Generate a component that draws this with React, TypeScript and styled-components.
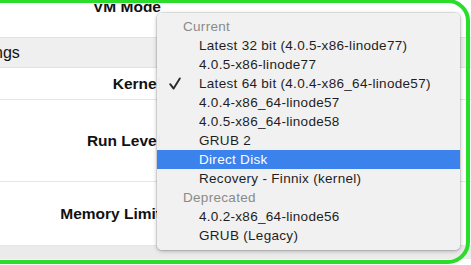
import styled, { createGlobalStyle } from 'styled-components';

const GlobalStyle = createGlobalStyle`
  html, body {
    margin: 0;
    padding: 0;
    background: #ffffff;
  }
  body {
    font-family: "Liberation Sans", Arial, Helvetica, sans-serif;
    -webkit-font-smoothing: antialiased;
  }
`;

const Page = styled.div`
  position: relative;
  width: 471px;
  height: 265px;
  overflow: hidden;
  background: #ffffff;
`;

const Form = styled.div`
  display: flex;
  flex-direction: column;
  margin-top: 4px;
  overflow: hidden;
`;

const Row = styled.div<{ h: number }>`
  display: grid;
  grid-template-columns: 161px 1fr;
  align-items: center;
  height: ${({ h }) => h}px;
  border-bottom: 1px solid #e6e6e6;
  background: #ffffff;
`;

const TopRow = styled.div`
  display: grid;
  grid-template-columns: 161px 1fr;
  align-items: start;
  height: 33px;
  background: #ffffff;
`;

const Label = styled.span<{ cut?: boolean }>`
  justify-self: end;
  font-size: 15.5px;
  line-height: 18px;
  font-weight: 700;
  color: #111111;
  white-space: nowrap;
  margin-top: ${({ cut }) => (cut ? '-6px' : '0')};
`;

const SectionHeader = styled.div`
  display: flex;
  align-items: center;
  height: 31px;
  padding-top: 1px;
  box-sizing: border-box;
  background: #efefef;
  border-top: 1px solid #e2e2e2;
  border-bottom: 1px solid #e2e2e2;
`;

const SectionTitle = styled.span`
  margin-left: -38px;
  font-size: 16px;
  color: #111111;
  white-space: nowrap;
`;

const Footer = styled.div`
  height: 13px;
  background: #ebebeb;
`;

const Menu = styled.div`
  position: absolute;
  left: 157px;
  top: 13px;
  width: 303px;
  box-sizing: border-box;
  padding: 4px 0 5px;
  background: rgba(241, 241, 241, 0.98);
  border-radius: 5px;
  box-shadow: 0 1px 4px rgba(0, 0, 0, 0.3), 0 0 0 1px rgba(0, 0, 0, 0.08);
`;

const GroupLabel = styled.div`
  height: 19px;
  line-height: 19px;
  padding-left: 26px;
  font-size: 13.5px;
  letter-spacing: 0.3px;
  color: #8a8a8a;
  white-space: nowrap;
`;

const Item = styled.div<{ active?: boolean }>`
  position: relative;
  height: 19px;
  line-height: 19px;
  padding-left: 42px;
  font-size: 13.5px;
  letter-spacing: 0.3px;
  white-space: nowrap;
  color: ${({ active }) => (active ? '#ffffff' : '#1e1e1e')};
  background: ${({ active }) => (active ? '#3b82ed' : 'transparent')};
`;

const Check = styled.svg`
  position: absolute;
  left: 12px;
  top: 3px;
  width: 12px;
  height: 13px;
`;

const Outline = styled.div`
  position: absolute;
  left: -30px;
  top: -1px;
  right: 1px;
  bottom: 1px;
  border: 4px solid #2bdc2b;
  border-radius: 22px;
  pointer-events: none;
`;

type Entry = { kind: 'group' | 'item'; text: string; checked?: boolean; active?: boolean };

const entries: Entry[] = [
  { kind: 'group', text: 'Current' },
  { kind: 'item', text: 'Latest 32 bit (4.0.5-x86-linode77)' },
  { kind: 'item', text: '4.0.5-x86-linode77' },
  { kind: 'item', text: 'Latest 64 bit (4.0.4-x86_64-linode57)', checked: true },
  { kind: 'item', text: '4.0.4-x86_64-linode57' },
  { kind: 'item', text: '4.0.5-x86_64-linode58' },
  { kind: 'item', text: 'GRUB 2' },
  { kind: 'item', text: 'Direct Disk', active: true },
  { kind: 'item', text: 'Recovery - Finnix (kernel)' },
  { kind: 'group', text: 'Deprecated' },
  { kind: 'item', text: '4.0.2-x86_64-linode56' },
  { kind: 'item', text: 'GRUB (Legacy)' },
];

export default function App() {
  return (
    <Page>
      <GlobalStyle />
      <Form>
        <TopRow>
          <Label cut>VM Mode</Label>
        </TopRow>
        <SectionHeader>
          <SectionTitle>Settings</SectionTitle>
        </SectionHeader>
        <Row h={31}>
          <Label>Kernel</Label>
        </Row>
        <Row h={81}>
          <Label>Run Level</Label>
        </Row>
        <Row h={63}>
          <Label>Memory Limit</Label>
        </Row>
        <Footer />
      </Form>

      <Menu>
        {entries.map((e) =>
          e.kind === 'group' ? (
            <GroupLabel key={e.text}>{e.text}</GroupLabel>
          ) : (
            <Item key={e.text} active={e.active}>
              {e.checked && (
                <Check viewBox="0 0 12 13">
                  <path d="M1.2 7.2 L4.6 11.6 L10.8 1.4" fill="none" stroke="#2a2a2a" strokeWidth="1.9" strokeLinecap="round" strokeLinejoin="round" />
                </Check>
              )}
              {e.text}
            </Item>
          )
        )}
      </Menu>

      <Outline />
    </Page>
  );
}
